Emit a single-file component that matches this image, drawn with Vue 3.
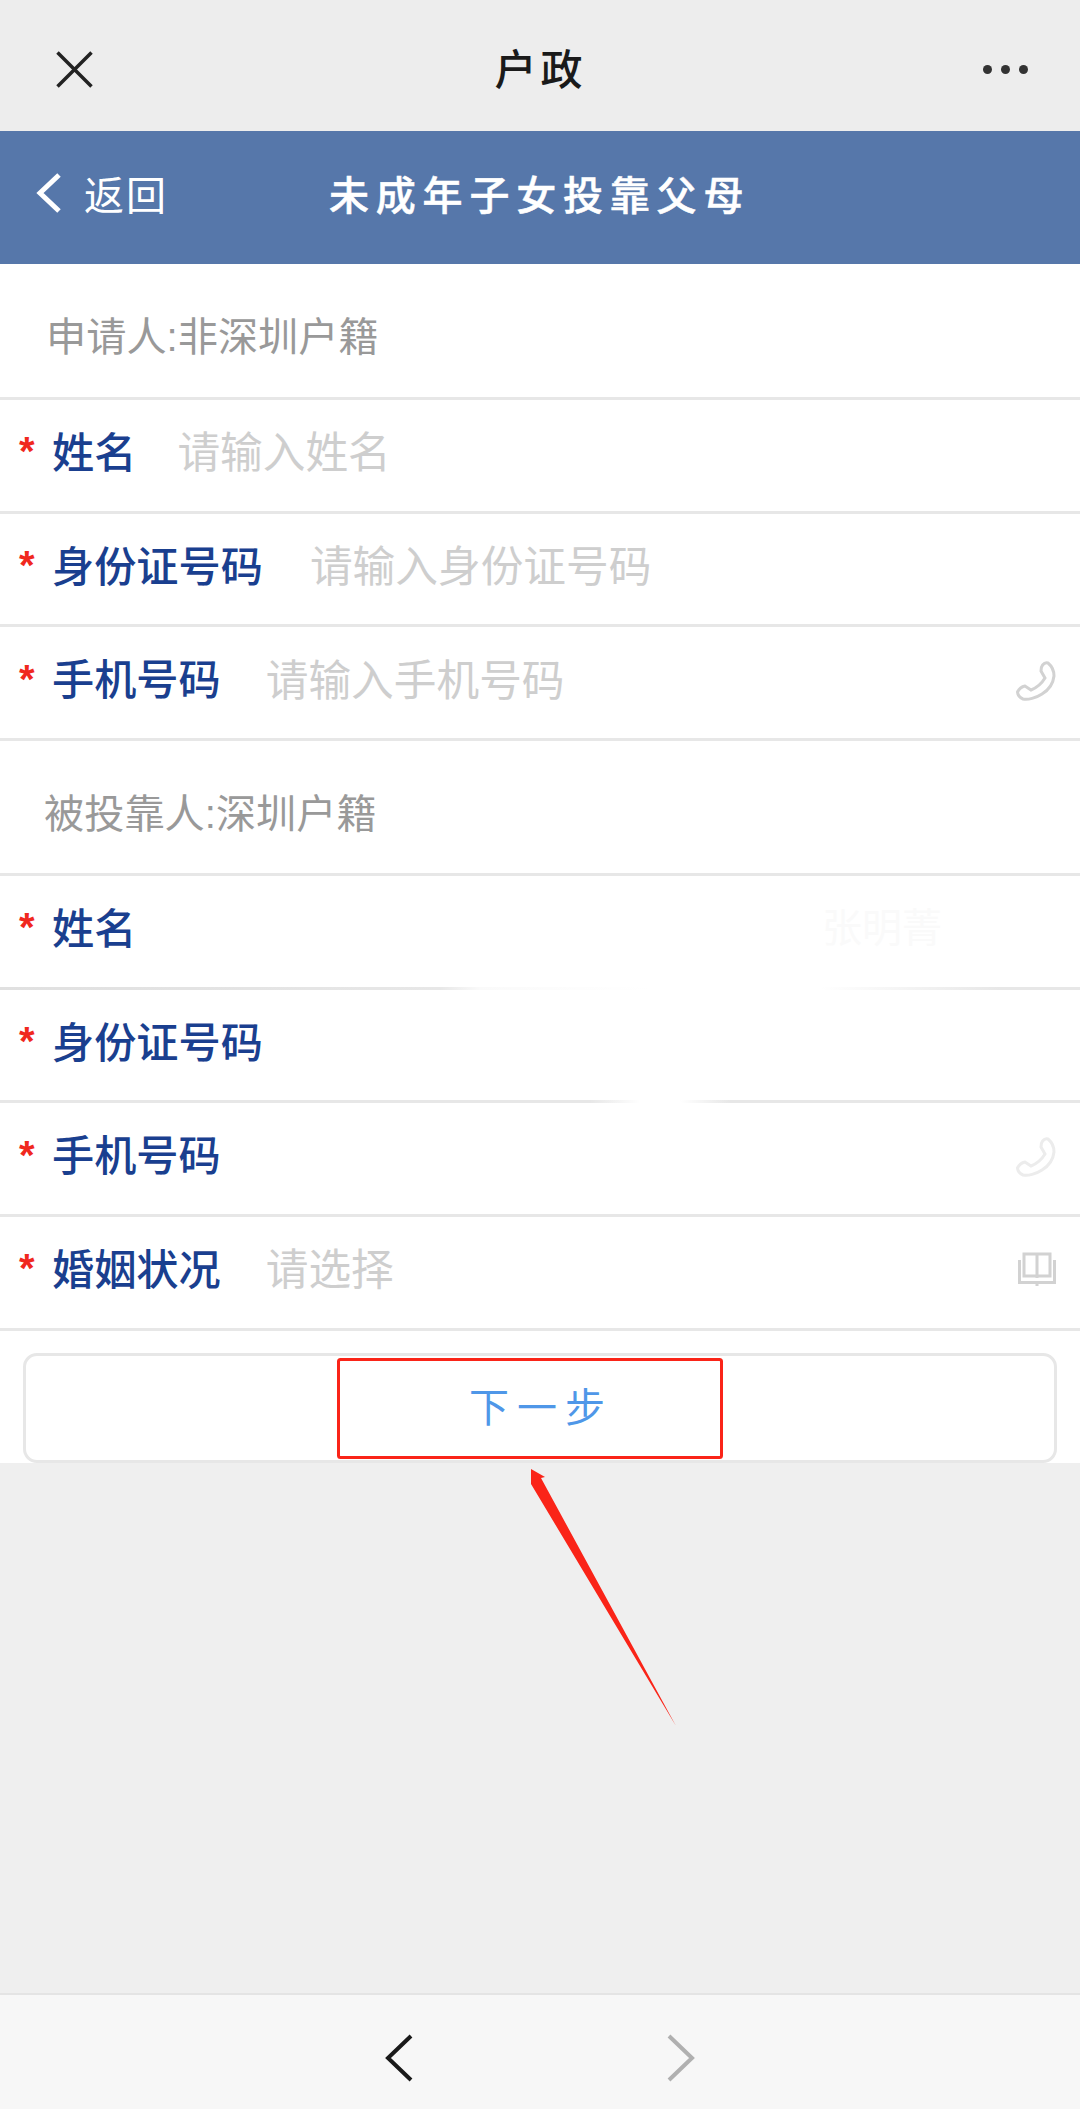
<template>
  <div class="page">
    <!-- Barra superior del mini programa -->
    <header class="topbar">
      <svg class="close-icon" width="37" height="37" viewBox="0 0 37 37">
        <path d="M1.5 1.5 L35.5 35.5 M35.5 1.5 L1.5 35.5" />
      </svg>
      <span class="topbar-title">户政</span>
      <div class="dots"><i></i><i></i><i></i></div>
    </header>

    <div class="navbar">
      <div class="back">
        <svg width="26" height="40" viewBox="0 0 26 40">
          <path d="M23 2 L4 20 L23 38" />
        </svg>
        <span>返回</span>
      </div>
      <span class="navbar-title">未成年子女投靠父母</span>
    </div>

    <section v-for="group in groups" :key="group.title" class="group">
      <div class="group-title" :class="group.cls">{{ group.title }}</div>
      <div
        v-for="row in group.rows"
        :key="row.label"
        class="row"
        :class="row.cls"
      >
        <span class="star">*</span>
        <span class="label">{{ row.label }}</span>
        <span v-if="row.hint" class="hint">{{ row.hint }}</span>
        <span v-if="row.ghost" class="ghost">{{ row.ghost }}</span>
        <svg v-if="row.icon === 'phone'" class="row-icon" :class="{ pale: row.pale }" width="40" height="42" viewBox="0 0 40 42">
          <path d="M26.6 5 Q29 2 32 3 Q38 8 38 16 C37 25 31 31 26 34 C20 38 12 40 7 39 Q2 37 1.5 32 Q4 27 9 26 L15 30 C20 28 26 23 29 18 L25 11 Q25 7 26.6 5 Z" />
        </svg>
        <svg v-else-if="row.icon === 'book'" class="row-icon" width="38" height="36" viewBox="0 0 38 36">
          <path d="M6 2 H32 V24 H6 Z M19 2 V26 M1.5 8 V30.5 H36.5 V8 M19 30.5 V34" />
        </svg>
      </div>
    </section>

    <div class="action">
      <button class="next-btn">下一步</button>
    </div>

    <div class="spacer"></div>

    <footer class="bottombar">
      <svg width="30" height="50" viewBox="0 0 30 50" class="nav-arrow">
        <path d="M26 3 L3 25 L26 47" />
      </svg>
      <svg width="30" height="50" viewBox="0 0 30 50" class="nav-arrow off">
        <path d="M4 3 L27 25 L4 47" />
      </svg>
    </footer>

    <!-- Anotación roja encima de la captura -->
    <svg class="annotation" width="1080" height="2109" viewBox="0 0 1080 2109">
      <rect x="338.5" y="1359.5" width="383" height="98" rx="2" fill="none" stroke="#fa2418" stroke-width="3" />
      <polygon points="531,1469 545,1477 541,1478 676,1726 531,1484" fill="#fa2418" />
    </svg>
  </div>
</template>

<script setup>
const groups = [
  {
    title: '申请人:非深圳户籍',
    cls: 'first',
    rows: [
      { label: '姓名', hint: '请输入姓名', cls: 'short' },
      { label: '身份证号码', hint: '请输入身份证号码', cls: 'wide' },
      { label: '手机号码', hint: '请输入手机号码', icon: 'phone' }
    ]
  },
  {
    title: '被投靠人:深圳户籍',
    cls: 'second',
    rows: [
      { label: '姓名', ghost: '张明菁', cls: 'faded-a' },
      { label: '身份证号码', cls: 'faded-b' },
      { label: '手机号码', icon: 'phone', pale: true },
      { label: '婚姻状况', hint: '请选择', icon: 'book' }
    ]
  }
]
</script>

<style>
html,
body {
  margin: 0;
  background: #efefef;
}
</style>

<style scoped>
.page {
  position: relative;
  width: 1080px;
  height: 2109px;
  display: flex;
  flex-direction: column;
  overflow: hidden;
  background: #efefef;
  font-family: "Liberation Sans", "Noto Sans CJK SC", sans-serif;
}

/* Barra superior */
.topbar {
  height: 131px;
  flex-shrink: 0;
  box-sizing: border-box;
  background: #ededed;
  display: grid;
  grid-template-columns: 1fr auto 1fr;
  align-items: center;
  padding: 8px 52px 0 56px;
}

.close-icon path {
  fill: none;
  stroke: #222;
  stroke-width: 3.5;
}

.topbar-title {
  font-size: 42px;
  font-weight: 500;
  letter-spacing: 4px;
  color: #1a1a1a;
  line-height: 56px;
  margin: 2px 0 0 -3px;
}

.dots {
  display: flex;
  gap: 9px;
  justify-content: flex-end;
}

.dots i {
  width: 9px;
  height: 9px;
  border-radius: 50%;
  background: #333;
}

/* Barra azul */
.navbar {
  height: 133px;
  flex-shrink: 0;
  box-sizing: border-box;
  background: #5677aa;
  display: flex;
  align-items: center;
  padding: 0 0 10px 36px;
  color: #fff;
}

.back {
  display: flex;
  align-items: center;
  gap: 22px;
  font-size: 40px;
  letter-spacing: 2px;
  width: 293px;
}

.back path {
  fill: none;
  stroke: #fff;
  stroke-width: 5;
}

.navbar-title {
  font-size: 40px;
  font-weight: 500;
  letter-spacing: 6.8px;
  -webkit-text-stroke: 0.5px #fff;
}

/* Formulario */
.group {
  background: #fff;
}

.group-title {
  display: flex;
  align-items: center;
  box-sizing: border-box;
  font-size: 40.2px;
  color: #999;
  border-bottom: 3px solid #e7e7e7;
  padding-top: 6px;
}

.group-title.first {
  height: 136px;
  padding-left: 46px;
}

.group-title.second {
  height: 135px;
  padding-left: 44px;
}

.row {
  height: 113.7px;
  box-sizing: border-box;
  display: flex;
  align-items: center;
  padding: 0 24px 12px 19px;
  border-bottom: 3px solid #e7e7e7;
  position: relative;
}

.row.faded-a {
  border-image: linear-gradient(to right, #e0e0e0 0, #e7e7e7 440px, #fafafa 480px, #fff 650px, #fff 820px, #e7e7e7 1000px) 1;
}

.row.faded-b {
  border-image: linear-gradient(to right, #e7e7e7 0, #e7e7e7 590px, #fff 640px, #fff 680px, #e7e7e7 730px) 1;
}

.star {
  width: 33px;
  flex-shrink: 0;
  font-size: 40px;
  font-weight: 700;
  color: #f0281e;
  line-height: 1;
  margin-top: 4px;
}

.label {
  font-size: 42.2px;
  font-weight: 500;
  color: #1a3f8f;
}

.hint {
  margin-left: 45px;
  font-size: 42.7px;
  color: #cecece;
}

.row.short .hint {
  margin-left: 41px;
}

.row.wide .hint {
  margin-left: 47px;
}

.ghost {
  margin-left: auto;
  margin-right: 114px;
  font-size: 40px;
  color: #fafafa;
}

.row-icon {
  margin-left: auto;
  margin-top: 8px;
  fill: none;
  stroke: #d2d2d2;
  stroke-width: 3;
}

.row-icon.pale {
  stroke: #ececec;
}

/* Botón */
.action {
  background: #fff;
  padding: 22px 23px 0;
}

.next-btn {
  display: block;
  width: 100%;
  height: 110px;
  box-sizing: border-box;
  background: #fff;
  border: 3px solid #e7e7e7;
  border-radius: 14px;
  padding: 0 0 6px 2px;
  font-family: inherit;
  font-size: 40px;
  letter-spacing: 8px;
  color: #4f97e8;
}

.spacer {
  flex: 1;
}

/* Barra inferior */
.bottombar {
  height: 116px;
  flex-shrink: 0;
  box-sizing: border-box;
  background: #f7f7f7;
  border-top: 2px solid #e4e4e4;
  display: flex;
  align-items: center;
  justify-content: center;
  gap: 250px;
  padding-top: 12px;
}

.nav-arrow path {
  fill: none;
  stroke: #1a1a1a;
  stroke-width: 4;
}

.nav-arrow.off path {
  stroke: #b0b0b0;
}

.annotation {
  position: absolute;
  left: 0;
  top: 0;
  pointer-events: none;
}
</style>
